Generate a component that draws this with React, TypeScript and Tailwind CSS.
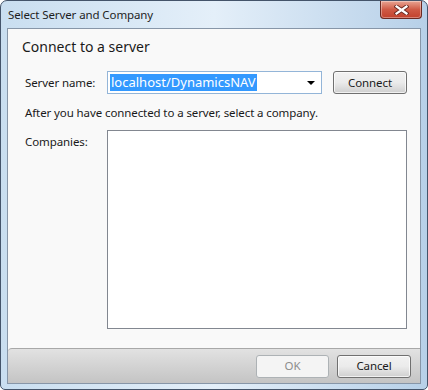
import React from 'react';

const font = { fontFamily: '"Noto Sans", "Open Sans", sans-serif' };

function CloseButton() {
  return (
    <div className="mr-[5px] w-[42px] h-[18px] rounded-b-[4px] border border-t-0 border-[#6b2a22] bg-gradient-to-b from-[#e8a493] via-[#cf5a45] to-[#c2412c] flex items-center justify-center shadow-[inset_0_0_0_1px_rgba(255,255,255,0.35)]">
      <svg width="15" height="10" viewBox="0 0 15 10">
        <path d="M2.5 1.5 L12.5 8.5 M12.5 1.5 L2.5 8.5" stroke="#6a2a22" strokeWidth="4" strokeLinecap="square" />
        <path d="M2.5 1.5 L12.5 8.5 M12.5 1.5 L2.5 8.5" stroke="#ffffff" strokeWidth="2.2" strokeLinecap="square" />
      </svg>
    </div>
  );
}

function VistaButton({ label, disabled }: { label: string; disabled?: boolean }) {
  return (
    <button
      className={`h-[23px] rounded-[3px] border text-[11.5px] tracking-[-0.1px] leading-none ${
        disabled
          ? 'border-[#adb2b5] bg-[#f4f4f4] text-[#8d8d8d]'
          : 'border-[#707070] bg-gradient-to-b from-[#f2f2f2] via-[#ebebeb] to-[#cfcfcf] text-[#1a1a1a] shadow-[inset_0_0_0_1px_rgba(255,255,255,0.7)]'
      }`}
    >
      {label}
    </button>
  );
}

export default function App() {
  return (
    <div
      className="w-[428px] h-[390px] rounded-t-[7px] rounded-b-[5px] border border-[#44546a] bg-gradient-to-r from-[#c9def0] via-[#e4eff9] to-[#b7d0e8] flex flex-col overflow-hidden"
      style={font}
    >
      {/* Title bar */}
      <div className="h-[27px] flex items-start justify-between shrink-0">
        <span className="pl-[7px] pt-[5px] text-[11.5px] tracking-[-0.1px] text-[#1e1e1e]">Select Server and Company</span>
        <CloseButton />
      </div>

      {/* Client area */}
      <div className="mx-[6px] mb-[5px] flex-1 border border-[#8796a8] bg-[#f9f9f9] flex flex-col">
        <div className="flex-1 pl-[14px] text-[11.5px] tracking-[-0.1px] text-[#1a1a1a]">
          <div className="mt-[6px] h-[24px] text-[14px] leading-[24px] tracking-normal text-[#1a1a1a]">Connect to a server</div>

          {/* Server row */}
          <div className="mt-[12px] flex items-center">
            <span className="pl-[3px] w-[85px]">Server name:</span>
            <div className="w-[215px] h-[23px] border border-[#93b5d8] bg-white flex items-center pl-[2px] pr-[6px]">
              <span className="h-[17px] px-[1px] bg-[#3399ff] text-white text-[13px] tracking-normal leading-[17px]">localhost/DynamicsNAV</span>
              <span className="flex-1" />
              <svg width="8" height="4" viewBox="0 0 8 4">
                <path d="M0 0 H8 L4 4 Z" fill="#000" />
              </svg>
            </div>
            <div className="ml-[11px] w-[74px] flex flex-col">
              <VistaButton label="Connect" />
            </div>
          </div>

          <div className="mt-[11px] pl-[3px] leading-[16px]">
            After you have connected to a server, select a company.
          </div>

          {/* Companies row */}
          <div className="mt-[9px] flex items-start">
            <span className="pl-[3px] w-[85px] pt-[3px]">Companies:</span>
            <div className="w-[300px] h-[199px] border border-[#828790] bg-white" />
          </div>
        </div>

        {/* Button bar */}
        <div className="h-[35px] shrink-0 border-t border-[#a8a8a8] rounded-tl-[4px] bg-gradient-to-b from-[#e2e2e2] to-[#c4c4c4] flex items-center justify-end pr-[9px] gap-[8px]">
          <div className="w-[73px] flex flex-col">
            <VistaButton label="OK" disabled />
          </div>
          <div className="w-[74px] flex flex-col">
            <VistaButton label="Cancel" />
          </div>
        </div>
      </div>
    </div>
  );
}
